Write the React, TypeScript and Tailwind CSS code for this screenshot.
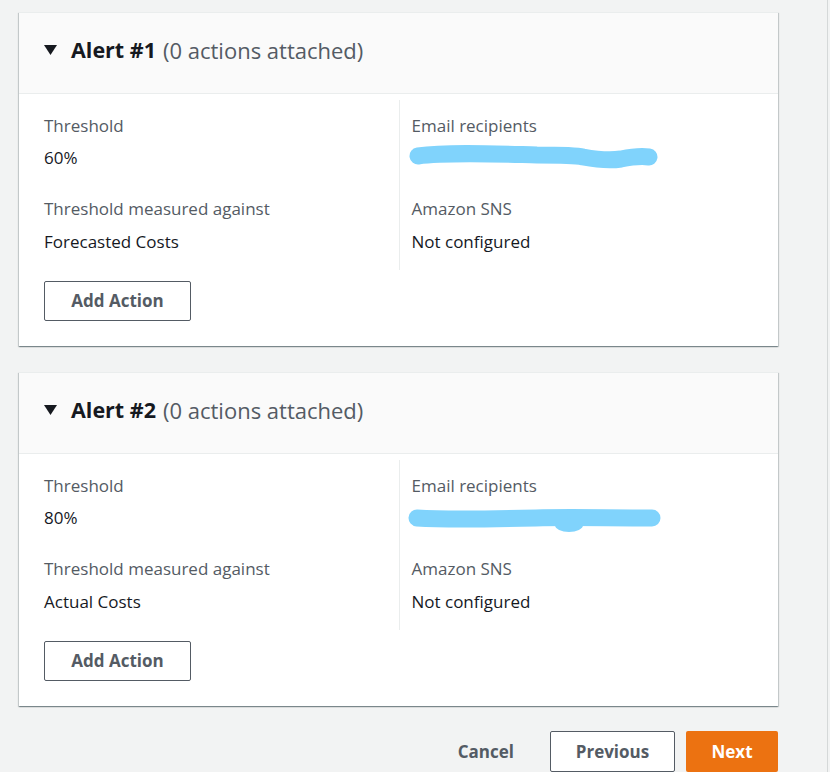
import React from "react";

const font = { fontFamily: '"Open Sans", "Noto Sans", Arial, sans-serif' };

function Scribble({ variant }: { variant: 1 | 2 }) {
  if (variant === 1) {
    return (
      <svg width="262" height="28" viewBox="0 0 262 28" className="block -ml-[5px]">
        <path
          d="M11 12 C 40 8, 90 10, 130 11 C 150 11, 168 11, 176 13 C 192 16, 202 17, 214 15 C 224 13, 234 12, 242 13"
          stroke="#80d3fc"
          strokeWidth="17"
          strokeLinecap="round"
          fill="none"
        />
      </svg>
    );
  }
  return (
    <svg width="264" height="32" viewBox="0 0 264 32" className="block -ml-[6px]">
      <path
        d="M11 14 C 40 16, 90 15, 130 14 C 160 13, 200 14, 246 14"
        stroke="#80d3fc"
        strokeWidth="17"
        strokeLinecap="round"
        fill="none"
      />
      <ellipse cx="163" cy="21" rx="14" ry="7" fill="#80d3fc" />
    </svg>
  );
}

function Alert({
  n,
  threshold,
  against,
}: {
  n: number;
  threshold: string;
  against: string;
}) {
  return (
    <div className="bg-white border-t border-[#eaeded] shadow-[0_1px_1px_0_rgba(0,28,36,0.3),1px_1px_1px_0_rgba(0,28,36,0.15),-1px_1px_1px_0_rgba(0,28,36,0.15)]">
      <div className="h-[81px] bg-[#fafafa] border-b border-[#eaeded] flex items-center pl-[25px] pb-[6px]">
        <svg width="13" height="10" viewBox="0 0 13 10" className="mr-[14px]">
          <path d="M0 0 L13 0 L6.5 10 Z" fill="#16191f" />
        </svg>
        <span className="text-[21.5px] leading-[30px] font-bold text-[#16191f]">
          Alert #{n}
        </span>
        <span className="text-[22px] leading-[30px] text-[#545b64] ml-[7px]">
          (0 actions attached)
        </span>
      </div>
      <div className="px-[25px] pt-[6px] pb-[25px]">
        <div className="grid grid-cols-2">
          <div className="pt-[15px] pb-[17px] text-[17px] leading-[22px]">
            <div className="text-[#545b64]">Threshold</div>
            <div className="mt-[10px] text-[#16191f]">{threshold}</div>
            <div className="mt-[29px] text-[#545b64]">Threshold measured against</div>
            <div className="mt-[11px] text-[#16191f]">{against}</div>
          </div>
          <div className="border-l border-[#eaeded] pl-[12px] pt-[15px] pb-[17px] text-[17px] leading-[22px]">
            <div className="text-[#545b64]">Email recipients</div>
            <div className="mt-[7px] h-[25px]">
              <Scribble variant={n === 1 ? 1 : 2} />
            </div>
            <div className="mt-[29px] text-[#545b64]">Amazon SNS</div>
            <div className="mt-[11px] text-[#16191f]">Not configured</div>
          </div>
        </div>
        <button className="mt-[11px] w-[147px] h-[40px] border border-[#545b64] rounded-[2px] bg-white text-[#545b64] font-bold text-[17px]">
          Add Action
        </button>
      </div>
    </div>
  );
}

export default function App() {
  return (
    <div style={font} className="w-[830px] h-[772px] overflow-hidden bg-[#f2f3f3]">
      <div className="w-[828px] h-[772px] border-r border-[#d5d8d8]">
        <div className="pl-[19px] pt-[12px] w-[778px] flex flex-col gap-[26px]">
          <Alert n={1} threshold="60%" against="Forecasted Costs" />
          <Alert n={2} threshold="80%" against="Actual Costs" />
          <div className="flex items-center justify-end -mt-[1px]">
            <button className="text-[#545b64] font-bold text-[17px] mr-[36px]">Cancel</button>
            <button className="w-[125px] h-[41px] border border-[#545b64] rounded-[2px] bg-white text-[#545b64] font-bold text-[17px] mr-[11px]">
              Previous
            </button>
            <button className="w-[92px] h-[41px] rounded-[2px] bg-[#ec7211] text-white font-bold text-[17px]">
              Next
            </button>
          </div>
        </div>
      </div>
    </div>
  );
}
